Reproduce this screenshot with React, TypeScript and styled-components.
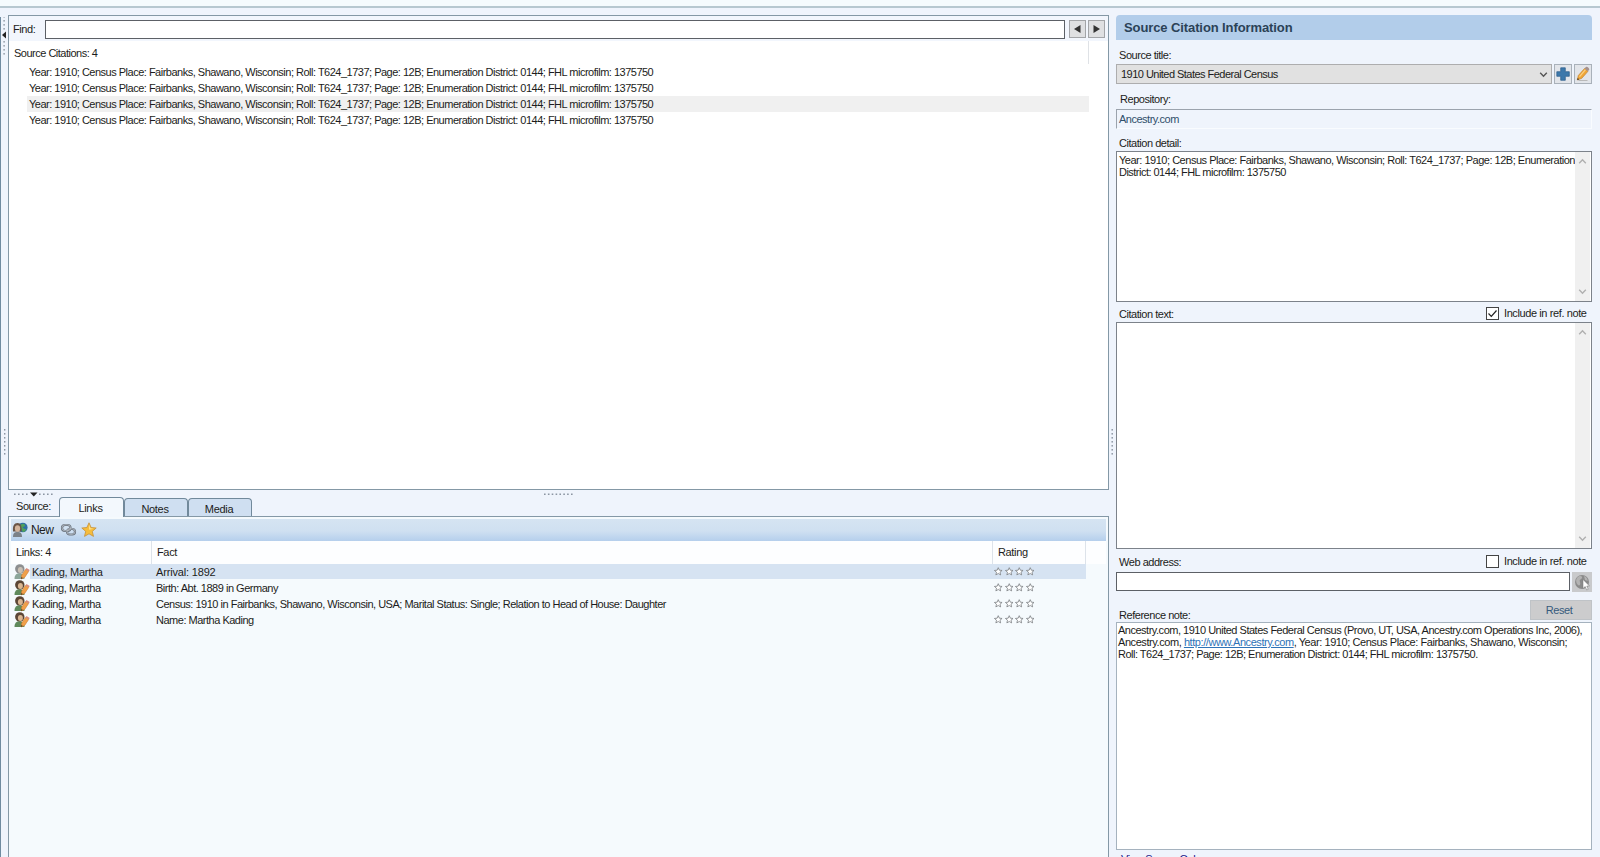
import React from 'react';
import styled, { createGlobalStyle } from 'styled-components';

const Global = createGlobalStyle`
  * { box-sizing: border-box; }
  body { margin: 0; overflow: hidden; }
  svg { display: block; flex: none; }
`;

const Window = styled.div`
  width: 1600px;
  height: 857px;
  overflow: hidden;
  display: flex;
  flex-direction: column;
  background: #eff4fc;
  color: #1c1c20;
  font: 11px/12px "Liberation Sans", Arial, sans-serif;
  letter-spacing: -0.5px;
  white-space: nowrap;
`;
const TopStrip = styled.div`
  height: 8px;
  flex: none;
  background: #f5fbfd;
  border-bottom: 2px solid #b7c8d0;
`;
const Body = styled.div`
  flex: 1;
  min-height: 0;
  display: flex;
  padding-top: 7px;
`;
const LeftRail = styled.div`
  width: 8px;
  flex: none;
  margin-top: 2px;
  border-left: 1px solid #6f8ba0;
  padding-left: 1px;
`;
const Left = styled.div`
  width: 1101px;
  flex: none;
  display: flex;
  flex-direction: column;
`;
const Panel = styled.section<{ $h?: number }>`
  ${(p) => (p.$h ? `height: ${p.$h}px; flex: none;` : 'flex: 1; min-height: 0;')}
  border: 1px solid #8498a6;
  ${(p) => (p.$h ? '' : 'border-bottom: 0; background: #f5fafd; padding: 2px 2px 0 2px;')}
  display: flex;
  flex-direction: column;
`;
const FindBar = styled.div`
  height: 25px;
  flex: none;
  display: flex;
  align-items: flex-start;
  padding: 4px 3px 0 4px;
  background: #f2f6fd;
`;
const FindLabel = styled.label`
  width: 32px;
  padding-top: 3px;
  letter-spacing: -0.4px;
`;
const Field = styled.div<{ $w: number; $h: number }>`
  width: ${(p) => p.$w}px;
  height: ${(p) => p.$h}px;
  border: 1px solid #5c6066;
  background: #fff;
`;
const NavButton = styled.button`
  width: 17px;
  height: 18px;
  margin: 0 0 0 2px;
  padding: 0;
  border: 1px solid #a3a5a8;
  background: #dfe0e2;
  display: grid;
  place-items: center;
  & + & { margin-left: 2px; }
`;
const NavGap = styled.div`width: 2px;`;
const CitationList = styled.div`
  flex: 1;
  background: #fff;
`;
const CitationHead = styled.div`
  height: 23px;
  width: 1080px;
  border-right: 1px solid #dfe2e6;
  padding: 6px 0 0 5px;
`;
const Citation = styled.div<{ $on?: boolean }>`
  height: 16px;
  width: 1062px;
  margin-left: 18px;
  padding: 2px 0 0 2px;
  background: ${(p) => (p.$on ? '#f0f0f0' : 'transparent')};
`;
const Divider = styled.div`
  height: 26px;
  flex: none;
  display: flex;
  position: relative;
`;
const OverDots = styled.div<{ $x: number; $y: number }>`
  position: absolute;
  left: ${(p) => p.$x}px;
  top: ${(p) => p.$y}px;
`;
const SourceLabel = styled.div`
  width: 51px;
  padding: 10px 0 0 8px;
  letter-spacing: -0.45px;
`;
const Tab = styled.div<{ $on?: boolean }>`
  width: ${(p) => (p.$on ? 65 : 64)}px;
  height: ${(p) => (p.$on ? 20 : 18)}px;
  margin-top: ${(p) => (p.$on ? 7 : 8)}px;
  border: 1px solid #71899b;
  border-bottom-width: 0;
  border-radius: 4px 4px 0 0;
  background: ${(p) => (p.$on ? '#f3f8fd' : '#cfdff1')};
  text-align: center;
  padding: 4px 2px 0 0;
  letter-spacing: -0.3px;
`;
const Toolbar = styled.div`
  height: 22px;
  flex: none;
  display: flex;
  align-items: center;
  padding-left: 1px;
  background: linear-gradient(#d5e4f2 0%, #cfe0f1 55%, #b5cfec 100%);
`;
const ToolText = styled.span`
  font-size: 12px;
  letter-spacing: -0.6px;
  margin: 0 7px 0 3px;
  width: 22px;
`;
const TableHead = styled.div`
  height: 23px;
  flex: none;
  display: flex;
  background: #fdfeff;
`;
const HeadCell = styled.div<{ $w: number }>`
  width: ${(p) => p.$w}px;
  border-right: 1px solid #dde3ea;
  padding: 5px 0 0 5px;
  letter-spacing: -0.35px;
`;
const LinkRow = styled.div`
  height: 16px;
  flex: none;
  display: flex;
  width: 1075px;
  padding-left: 3px;
`;
const RowInner = styled.div<{ $on?: boolean }>`
  flex: 1;
  height: 15px;
  display: flex;
  padding-top: 2px;
  background: ${(p) => (p.$on ? '#d6e3f2' : 'transparent')};
`;
const Name = styled.div<{ $on?: boolean }>`
  width: 126px;
  padding-left: 2px;
  letter-spacing: ${(p) => (p.$on ? -0.28 : -0.42)}px;
`;
const Fact = styled.div<{ $on?: boolean }>`
  width: 838px;
  letter-spacing: ${(p) => (p.$on ? -0.17 : -0.49)}px;
`;
const Stars = styled.div`
  display: flex;
  gap: 2px;
  margin-top: 1px;
`;

const MidRail = styled.div`
  width: 7px;
  flex: none;
  padding-left: 1px;
`;
const Right = styled.aside`
  width: 476px;
  flex: none;
  display: flex;
  flex-direction: column;
`;
const Title = styled.h1`
  margin: 0;
  height: 25px;
  flex: none;
  border-radius: 4px 4px 0 0;
  background: #b2cdea;
  color: #2b4257;
  font: bold 13px/26px "Liberation Sans", Arial, sans-serif;
  letter-spacing: -0.1px;
  padding-left: 8px;
`;
const LabelRow = styled.div<{ $h: number; $top: number; $x?: number }>`
  height: ${(p) => p.$h}px;
  flex: none;
  display: flex;
  justify-content: space-between;
  align-items: flex-start;
  padding: ${(p) => p.$top}px 0 0 ${(p) => p.$x ?? 3}px;
  letter-spacing: -0.46px;
`;
const CheckLabel = styled.label`
  display: flex;
  gap: 5px;
  width: 106px;
  margin-top: -1px;
  line-height: 13px;
  letter-spacing: -0.4px;
`;
const Check = styled.span`
  width: 13px;
  height: 13px;
  border: 1px solid #444;
  background: #fff;
`;
const Row = styled.div`
  display: flex;
  flex: none;
`;
const Combo = styled.div`
  width: 436px;
  height: 20px;
  border: 1px solid #adadae;
  background: #e1e1e1;
  display: flex;
  justify-content: space-between;
  align-items: center;
  padding: 0 3px 0 4px;
  letter-spacing: -0.53px;
`;
const SmallButton = styled.button<{ $w?: number; $bg?: string }>`
  width: ${(p) => p.$w ?? 18}px;
  height: 20px;
  margin-left: 2px;
  padding: 0;
  border: 1px solid ${(p) => p.$bg ?? '#a9b1ba'};
  background: ${(p) => p.$bg ?? '#e2e5ea'};
  display: grid;
  place-items: center;
`;
const Repo = styled.div`
  height: 20px;
  flex: none;
  border: 1px solid #f9fcff;
  border-top-color: #9ba3ad;
  border-left-color: #9ba3ad;
  color: #2f4f6b;
  padding: 3px 0 0 2px;
  letter-spacing: -0.5px;
`;
const Memo = styled.div<{ $h: number; $soft?: boolean }>`
  height: ${(p) => p.$h}px;
  flex: none;
  display: flex;
  justify-content: space-between;
  border: 1px solid ${(p) => (p.$soft ? '#a5b2be' : '#7c828a')};
  background: #fff;
`;
const MemoText = styled.div<{ $top: number }>`
  width: 459px;
  padding: ${(p) => p.$top}px 0 0 ${(p) => (p.$top === 1 ? 1 : 2)}px;
`;
const Line = styled.div<{ $ls: number }>`
  letter-spacing: ${(p) => p.$ls}px;
`;
const Link = styled.a`
  color: #2e73b8;
  text-decoration: underline;
`;
const ScrollTrack = styled.div`
  width: 15px;
  flex: none;
  margin-right: 1px;
  background: #f0f0f0;
  display: flex;
  flex-direction: column;
  justify-content: space-between;
  align-items: center;
  padding: 6px 0;
`;
const ResetButton = styled.button`
  width: 62px;
  height: 20px;
  margin-top: -9px;
  border: 1px solid #bfc3c7;
  background: #cccccd;
  color: #355a7c;
  font: inherit;
  letter-spacing: -0.4px;
  padding: 0 4px 0 0;
`;
const BottomLink = styled.div`
  padding: 3px 0 0 5px;
  color: #15158a;
  flex: none;
`;

const VDots = ({ n, top }: { n: number; top: number }) => (
  <svg width="5" height={top + n * 4} viewBox={`0 0 5 ${top + n * 4}`}>
    {Array.from({ length: n }, (_, i) => (
      <rect key={i} x="1.5" y={top + i * 4} width="1.4" height="1.6" fill="#8b95a2" />
    ))}
  </svg>
);
const RailGrip = () => (
  <svg width="6" height="440" viewBox="0 0 6 440">
    {[-1, 3, 7, 11, 24, 28, 32, 36].map((y) => (
      <rect key={y} x="1.4" y={y} width="1.4" height="1.6" fill="#9099a5" />
    ))}
    <path d="M4 14.5v7L0 18z" fill="#222" />
    {[0, 1, 2, 3, 4, 5, 6].map((i) => (
      <rect key={i} x="2" y={412 + i * 4} width="1.4" height="1.6" fill="#8b95a2" />
    ))}
  </svg>
);
const HDots = ({ arrow }: { arrow?: boolean }) => (
  <svg width="40" height="5" viewBox="0 0 40 5">
    {(arrow ? [0, 4, 8, 12, 25, 29, 33, 37] : [0, 3.9, 7.7, 11.6, 15.4, 19.3, 23.1, 27]).map((x) => (
      <rect key={x} x={x} y="1.5" width="1.6" height="1.5" fill="#8b95a2" />
    ))}
    {arrow && <path d="M16 .5h7.5L19.8 4.5z" fill="#222" />}
  </svg>
);
const Chevron = ({ up, color = '#b0b0b0' }: { up?: boolean; color?: string }) => (
  <svg width="9" height="7" viewBox="0 0 9 7">
    <path d={up ? 'M1.2 5.2 4.5 1.8 7.8 5.2' : 'M1.2 1.8 4.5 5.2 7.8 1.8'} fill="none" stroke={color} strokeWidth="1.4" />
  </svg>
);
const PersonPencil = ({ pale }: { pale?: boolean }) => (
  <svg width="16" height="16" viewBox="0 0 16 16">
    <path d="M.5 15c0-4 2-5.700 5-5.700s5 1.700 5 5.700z" fill={pale ? '#8ca69a' : '#5f8a5c'} />
    <circle cx="5.800" cy="4.900" r="4.700" fill={pale ? '#8d8f90' : '#5b4636'} />
    <ellipse cx="6.400" cy="6" rx="2.500" ry="3" fill={pale ? '#c9c0b4' : '#d9b692'} />
    <path d="M7 15l.7-4 3.800-5.600 3.200 2-4 6z" fill="#f0a04a" stroke="#c77527" strokeWidth=".5" />
    <path d="M11.500 5.400l1-1.500 3.200 2-1 1.500z" fill="#d88a7a" />
    <path d="M7 15l.4-2 1.500 1z" fill="#493524" />
  </svg>
);
const PersonGlobe = () => (
  <svg width="16" height="16" viewBox="0 0 16 16">
    <circle cx="10.800" cy="5.500" r="4.800" fill="#2f6fa6" />
    <path d="M9 2.500c2-1.500 3.500-.5 4 .5s-1 2-2 2 1 2 2.500 2-.5 2.800-2 3-1.500-3-2.500-4z" fill="#4fa15b" />
    <path d="M1 15c0-4 1.500-5 4.500-5s4.500 1 4.500 5z" fill="#7b8188" />
    <path d="M1 9c-.5-5 1-8 4.500-8S10 4 9.500 9.500H1z" fill="#6a5546" />
    <ellipse cx="5.500" cy="6.500" rx="2.600" ry="3.300" fill="#d3b49b" />
  </svg>
);
const ChainIcon = () => (
  <svg width="17" height="14" viewBox="0 0 17 14" fill="none">
    <g stroke="#69727d" strokeWidth="2.200">
      <rect x="2" y="2" width="8.500" height="6" rx="3" />
      <rect x="7" y="6" width="8" height="5.500" rx="2.700" />
    </g>
    <g stroke="#c9ced5" strokeWidth=".7">
      <rect x="2" y="1.800" width="8.500" height="6" rx="3" />
      <rect x="7" y="5.800" width="8" height="5.500" rx="2.700" />
    </g>
  </svg>
);
const STAR = 'M8 .8l2.100 4.700 5.100.5-3.900 3.400 1.200 5L8 11.800l-4.500 2.600 1.200-5L.8 6l5.100-.5z';
const GoldStar = () => (
  <svg width="16" height="16" viewBox="0 0 16 16">
    <path d={STAR} fill="#f6bd3c" stroke="#c5913a" strokeWidth=".8" />
    <path d="M8 2.500l1.400 3.800 3.200.4-4.600 1z" fill="#fde08c" />
  </svg>
);
const OutlineStar = () => (
  <svg width="8.500" height="9" viewBox="0 0 16 16">
    <path d={STAR} fill="#fff" stroke="#7a7d82" strokeWidth="1.500" />
  </svg>
);
const Tri = ({ left }: { left?: boolean }) => (
  <svg width="7" height="8" viewBox="0 0 7 8">
    <path d={left ? 'M6.500 0v8L0 4z' : 'M.5 0v8L7 4z'} fill="#333" />
  </svg>
);
const PlusIcon = () => (
  <svg width="14" height="14" viewBox="0 0 14 14">
    <path d="M4.700.8h4.600v3.900h4v4.600h-4v4H4.700v-4H.8V4.700h3.900z" fill="#3d78ab" stroke="#2b5c8b" strokeWidth=".7" />
  </svg>
);
const PencilIcon = () => (
  <svg width="16" height="16" viewBox="0 0 16 16">
    <path d="M3.500 14.500h9" stroke="#b9b9b9" />
    <path d="M2.300 14l1-4.500L9.500 2.500l3.500 2.800-6.200 7z" fill="#f0a637" stroke="#b87a2a" strokeWidth=".6" />
    <path d="M4.500 10.700l6-7" stroke="#fbd285" strokeWidth="1.200" />
    <path d="M9.500 2.500l1.400-1.600c1-.8 3.800 1.300 3.300 2.600L13 5.300z" fill="#a5908c" />
    <path d="M2.300 14l.4-2 1.500 1.300z" fill="#332a22" />
  </svg>
);
const GlobeCursor = () => (
  <svg width="17" height="17" viewBox="0 0 17 17">
    <circle cx="8" cy="8" r="7" fill="#8b8b8b" />
    <path d="M3 4c2-3 6-2 5 0s-3 1-2 4-1 4-2 3S1 7 3 4zM10 2c3 1 4 4 3.500 5L11 6z" fill="#b3b3b3" />
    <path d="M9 5.500v9l2.200-2 1.500 3.500 1.500-.7-1.400-3.300h2.700z" fill="#fff" stroke="#777" strokeWidth=".5" />
  </svg>
);

const CITE =
  'Year: 1910; Census Place: Fairbanks, Shawano, Wisconsin; Roll: T624_1737; Page: 12B; Enumeration District: 0144; FHL microfilm: 1375750';
const FACTS = [
  'Arrival: 1892',
  'Birth: Abt. 1889 in Germany',
  'Census: 1910 in Fairbanks, Shawano, Wisconsin, USA; Marital Status: Single; Relation to Head of House: Daughter',
  'Name: Martha Kading',
];

const Scroll = () => (
  <ScrollTrack>
    <Chevron up />
    <Chevron />
  </ScrollTrack>
);

export default function App() {
  return (
    <Window>
      <Global />
      <TopStrip />
      <Body>
        <LeftRail>
          <RailGrip />
        </LeftRail>
        <Left>
          <Panel $h={475}>
            <FindBar>
              <FindLabel>Find:</FindLabel>
              <Field $w={1021} $h={19} />
              <NavGap />
              <NavButton><Tri left /></NavButton>
              <NavButton><Tri /></NavButton>
            </FindBar>
            <CitationList>
              <CitationHead>Source Citations: 4</CitationHead>
              {[0, 1, 2, 3].map((i) => (
                <Citation key={i} $on={i === 2}>{CITE}</Citation>
              ))}
            </CitationList>
          </Panel>
          <Divider>
            <OverDots $x={6} $y={2}><HDots arrow /></OverDots>
            <OverDots $x={536} $y={2}><HDots /></OverDots>
            <SourceLabel>Source:</SourceLabel>
            <Tab $on>Links</Tab>
            <Tab>Notes</Tab>
            <Tab>Media</Tab>
          </Divider>
          <Panel>
            <Toolbar>
              <PersonGlobe />
              <ToolText>New</ToolText>
              <ChainIcon />
              <NavGap />
              <NavGap />
              <GoldStar />
            </Toolbar>
            <TableHead>
              <HeadCell $w={141}>Links: 4</HeadCell>
              <HeadCell $w={841}>Fact</HeadCell>
              <HeadCell $w={93}>Rating</HeadCell>
            </TableHead>
            {FACTS.map((f, i) => (
              <LinkRow key={f}>
                <PersonPencil pale={i === 0} />
                <RowInner $on={i === 0}>
                  <Name $on={i === 0}>Kading, Martha</Name>
                  <Fact $on={i === 0}>{f}</Fact>
                  <Stars>
                    <OutlineStar /><OutlineStar /><OutlineStar /><OutlineStar />
                  </Stars>
                </RowInner>
              </LinkRow>
            ))}
          </Panel>
        </Left>
        <MidRail>
          <VDots n={7} top={414} />
        </MidRail>
        <Right>
          <Title>Source Citation Information</Title>
          <LabelRow $h={24} $top={9}>Source title:</LabelRow>
          <Row>
            <Combo>
              1910 United States Federal Census
              <Chevron color="#555" />
            </Combo>
            <SmallButton><PlusIcon /></SmallButton>
            <SmallButton><PencilIcon /></SmallButton>
          </Row>
          <LabelRow $h={25} $top={9} $x={4}>Repository:</LabelRow>
          <Repo>Ancestry.com</Repo>
          <LabelRow $h={22} $top={8}>Citation detail:</LabelRow>
          <Memo $h={151}>
            <MemoText $top={2}>
              <Line $ls={-0.48}>Year: 1910; Census Place: Fairbanks, Shawano, Wisconsin; Roll: T624_1737; Page: 12B; Enumeration</Line>
              <Line $ls={-0.52}>District: 0144; FHL microfilm: 1375750</Line>
            </MemoText>
            <Scroll />
          </Memo>
          <LabelRow $h={20} $top={6}>
            Citation text:
            <CheckLabel>
              <Check>
                <svg width="11" height="11" viewBox="0 0 11 11">
                  <path d="M1.500 5.500l2.800 2.800L9.500 2.500" fill="none" stroke="#222" strokeWidth="1.200" />
                </svg>
              </Check>
              Include in ref. note
            </CheckLabel>
          </LabelRow>
          <Memo $h={227}>
            <MemoText $top={2} />
            <Scroll />
          </Memo>
          <LabelRow $h={23} $top={7}>
            Web address:
            <CheckLabel>
              <Check />
              Include in ref. note
            </CheckLabel>
          </LabelRow>
          <Row>
            <Field $w={454} $h={19} />
            <SmallButton $w={20} $bg="#c9cacc"><GlobeCursor /></SmallButton>
          </Row>
          <LabelRow $h={30} $top={17}>
            Reference note:
            <ResetButton>Reset</ResetButton>
          </LabelRow>
          <Memo $h={228} $soft>
            <MemoText $top={1}>
              <Line $ls={-0.49}>Ancestry.com, 1910 United States Federal Census (Provo, UT, USA, Ancestry.com Operations Inc, 2006),</Line>
              <Line $ls={-0.43}>Ancestry.com, <Link>http://www.Ancestry.com</Link>, Year: 1910; Census Place: Fairbanks, Shawano, Wisconsin;</Line>
              <Line $ls={-0.5}>Roll: T624_1737; Page: 12B; Enumeration District: 0144; FHL microfilm: 1375750.</Line>
            </MemoText>
          </Memo>
          <BottomLink>View Source Only</BottomLink>
        </Right>
      </Body>
    </Window>
  );
}
